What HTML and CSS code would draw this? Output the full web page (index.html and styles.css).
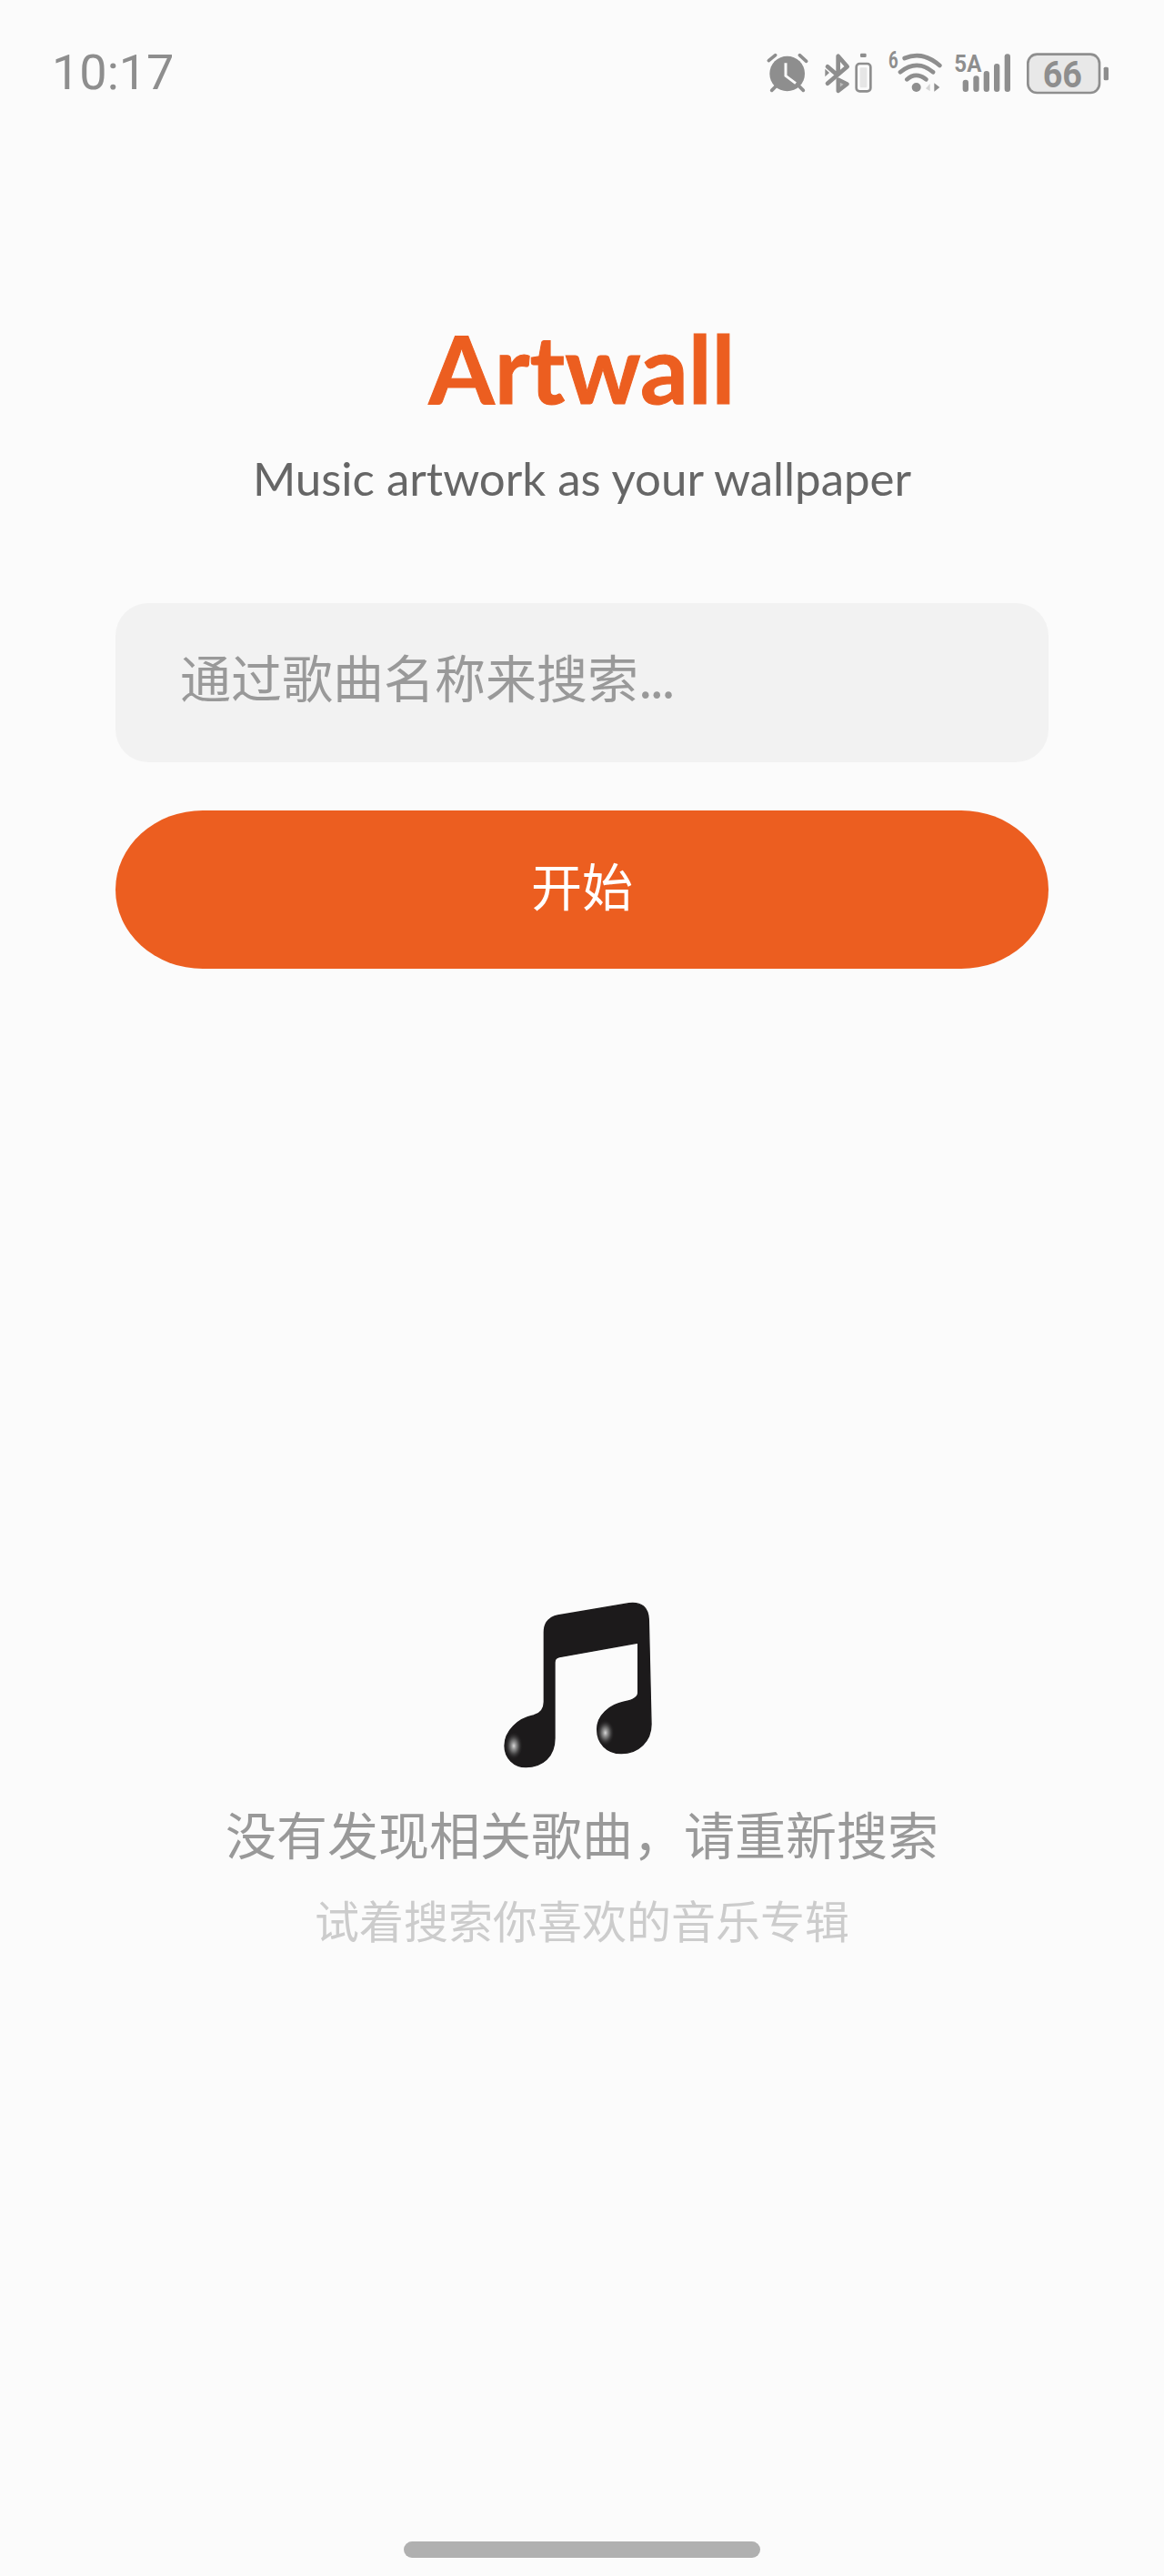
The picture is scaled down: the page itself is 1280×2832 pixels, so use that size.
FILE: index.html
```html
<!DOCTYPE html>
<html>
<head>
    <title>Artwall</title>
    <meta charset="UTF-8">
    <meta name="viewport" content="width=device-width, initial-scale=1.0">
    <link rel="stylesheet" href="styles.css">
</head>
<body>
    <div class="status-bar">
        <span class="time">10:17</span>
        <div class="status-icons">
            <!-- alarm -->
            <svg class="icon" width="48" height="80" viewBox="66 0 144 240">
                <circle cx="137" cy="123" r="58" fill="#8e8e8e"/>
                <path d="M132 88V130L165 155" fill="none" stroke="#fbfbfb" stroke-width="9"/>
                <path d="M76 80L98 62M178 62L200 82M86 178L98 166M178 166L190 178" fill="none" stroke="#8e8e8e" stroke-width="11" stroke-linecap="round"/>
            </svg>
            <!-- bluetooth + device battery -->
            <svg class="icon" width="58" height="80" viewBox="246 0 174 240">
                <path d="M270 155L335 100L305 65V122M270 100L298 124" fill="none" stroke="#8e8e8e" stroke-width="14" stroke-linejoin="round" stroke-linecap="round"/>
                <path d="M305 142L335 157L305 180Z" fill="#bdbdbd" stroke="#8e8e8e" stroke-width="13" stroke-linejoin="round"/>
                <path d="M262 107L276 120L262 133Z" fill="#8e8e8e"/>
                <rect x="378" y="56" width="20" height="13" rx="4" fill="#8e8e8e"/>
                <rect x="365" y="90" width="47" height="91" rx="11" fill="#fbfbfb" stroke="#8e8e8e" stroke-width="8"/>
                <rect x="377" y="103" width="23" height="66" rx="3" fill="#e6e6e6"/>
            </svg>
            <!-- wifi -->
            <svg class="icon" width="64" height="80" viewBox="456 0 192 240">
                <text class="icon-text" x="471" y="104" font-size="76" textLength="32" lengthAdjust="spacingAndGlyphs">6</text>
                <path d="M524 72C565 55 605 65 640 96M510 118C545 88 585 88 618 118M532 142C550 124 575 124 595 142" fill="none" stroke="#8e8e8e" stroke-width="14" stroke-linecap="round"/>
                <circle cx="563" cy="168" r="15" fill="#8e8e8e"/>
                <path d="M608 156V180L594 172Z" fill="#d6d6d6"/>
                <path d="M622 154V182L640 168Z" fill="#8e8e8e"/>
            </svg>
            <!-- signal -->
            <svg class="icon" width="64" height="80" viewBox="684 0 192 240">
                <text class="icon-text" x="688" y="117" font-size="78" textLength="90" lengthAdjust="spacingAndGlyphs">5A</text>
                <rect x="716" y="143" width="19" height="40" rx="9" fill="#8e8e8e"/>
                <rect x="751" y="130" width="19" height="53" rx="9" fill="#8e8e8e"/>
                <rect x="785" y="114" width="19" height="69" rx="9" fill="#8e8e8e"/>
                <rect x="819" y="90" width="19" height="93" rx="9" fill="#8e8e8e"/>
                <rect x="854" y="58" width="19" height="125" rx="9" fill="#8e8e8e"/>
            </svg>
            <!-- battery -->
            <svg class="icon" width="96" height="80" viewBox="912 0 288 240">
                <rect x="931" y="59" width="236" height="127" rx="30" fill="#e8e8e8" stroke="#8e8e8e" stroke-width="8"/>
                <text class="icon-text" x="980" y="167" font-size="122" textLength="130" lengthAdjust="spacingAndGlyphs">66</text>
                <rect x="1181" y="101" width="16" height="44" rx="5" fill="#8e8e8e"/>
            </svg>
        </div>
    </div>

    <div class="search-panel">
        <h1 class="title">Artwall</h1>
        <p class="subtitle">Music artwork as your wallpaper</p>
        <div class="search-box">通过歌曲名称来搜索<span class="dots">...</span></div>
        <button class="start-btn">开始</button>
    </div>

    <div class="empty-state">
        <svg class="note" width="240" height="230" viewBox="0 0 720 690">
            <defs>
                <radialGradient id="shine-a" cx="0.5" cy="0.5" r="0.5">
                    <stop offset="0" stop-color="#d8d8d8"/>
                    <stop offset="0.45" stop-color="#777" stop-opacity="0.8"/>
                    <stop offset="1" stop-color="#1c1a1b" stop-opacity="0"/>
                </radialGradient>
            </defs>
            <path d="M235 420V190Q235 145 280 135L515 95Q578 88 580 150L588 490C590 550 545 590 490 590C440 590 410 555 410 510C410 465 450 430 500 420C525 415 545 405 545 390V225L285 272Q270 275 270 290V540C270 600 230 635 175 635C135 635 105 605 105 565C105 515 150 475 200 465C220 460 235 445 235 420Z" fill="#1c1a1b" stroke="#1c1a1b" stroke-width="4"/>
            <ellipse cx="135" cy="565" rx="30" ry="46" fill="url(#shine-a)"/>
            <ellipse cx="437" cy="522" rx="30" ry="44" fill="url(#shine-a)"/>
        </svg>
        <div class="empty-title">没有发现相关歌曲，请重新搜索</div>
        <div class="empty-hint">试着搜索你喜欢的音乐专辑</div>
    </div>

    <div class="home-bar"></div>
</body>
</html>
```

FILE: styles.css
```css
body {
    margin: 0;
    height: 2832px;
    display: flex;
    flex-direction: column;
    align-items: center;
    background: #fbfbfb;
    font-family: "Lato", "Noto Sans CJK SC", sans-serif;
    overflow: hidden;
}
.status-bar {
    box-sizing: border-box;
    width: 100%;
    height: 120px;
    padding: 40px 60px 0 57px;
    display: flex;
    justify-content: space-between;
    align-items: flex-start;
}
.time {
    font-family: "Roboto", sans-serif;
    font-size: 54px;
    line-height: 80px;
    color: #8e8e8e;
}
.status-icons {
    display: flex;
    gap: 12px;
}
.icon {
    display: block;
}
.icon-text {
    font-family: "Roboto", sans-serif;
    font-weight: 700;
    fill: #8e8e8e;
}
.search-panel {
    width: 1026px;
    display: flex;
    flex-direction: column;
    align-items: center;
}
.title {
    margin: 224px 0 0;
    font-size: 104px;
    line-height: 120px;
    font-weight: 700;
    color: #ec5e20;
    -webkit-text-stroke: 1px #ec5e20;
}
.subtitle {
    margin: 30px 0 0;
    font-size: 51px;
    line-height: 64px;
    color: #666;
}
.search-box {
    box-sizing: border-box;
    width: 100%;
    height: 175px;
    margin-top: 105px;
    padding-left: 71px;
    border-radius: 36px;
    background: #f2f2f2;
    font-family: "Noto Sans CJK SC", sans-serif;
    font-size: 56px;
    line-height: 160px;
    color: #999;
}
.dots {
    letter-spacing: -3px;
}
.start-btn {
    width: 100%;
    height: 174px;
    margin-top: 53px;
    padding-bottom: 14px;
    border: none;
    border-radius: 96px / 87px;
    background: #ec5e20;
    font-family: "Noto Sans CJK SC", sans-serif;
    font-size: 56px;
    color: #fff;
}
.empty-state {
    display: flex;
    flex-direction: column;
    align-items: center;
    margin-top: 666px;
}
.note {
    display: block;
    filter: blur(0.5px);
}
.empty-title {
    margin-top: 14px;
    font-family: "Noto Sans CJK SC", sans-serif;
    font-size: 56px;
    line-height: 80px;
    color: #999;
}
.empty-hint {
    margin-top: 20px;
    font-family: "Noto Sans CJK SC", sans-serif;
    font-size: 49px;
    line-height: 70px;
    color: #ccc;
}
.home-bar {
    width: 392px;
    height: 18px;
    margin-top: auto;
    margin-bottom: 20px;
    border-radius: 9px;
    background: #b0b0b0;
}
```
